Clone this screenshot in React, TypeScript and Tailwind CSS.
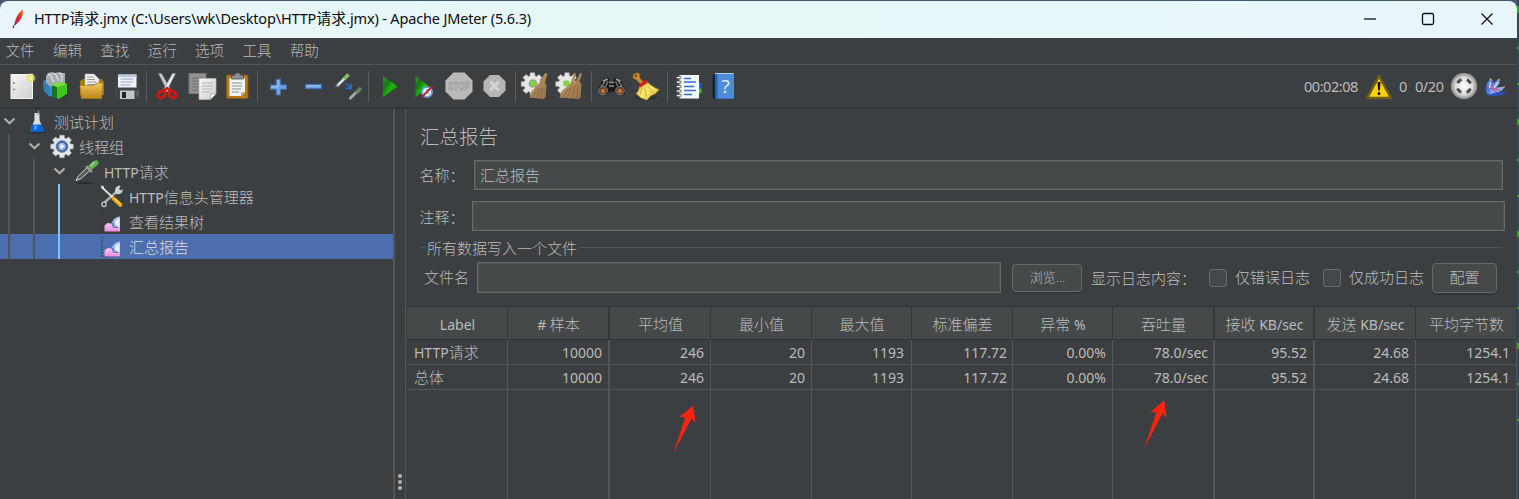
import React from "react";

const cjk = /([\u3000-\u9fff\uff00-\uffef]+)/;

/** Mixed Chinese / Latin label: Latin runs use a slightly smaller face. */
function T({ children, latin = "text-[14px]" }: { children: string; latin?: string }) {
  return (
    <span className="whitespace-pre">
      {children.split(cjk).map((part, i) =>
        cjk.test(part) ? (
          <span key={i}>{part}</span>
        ) : (
          <span key={i} className={`font-normal ${latin}`}>
            {part}
          </span>
        ),
      )}
    </span>
  );
}

function Tool({ children }: { children: React.ReactNode }) {
  return (
    <svg width="35" height="30" viewBox="0 0 35 30" className="h-[30px] w-[35px] shrink-0">
      {children}
    </svg>
  );
}

function Sep() {
  return (
    <div className="flex h-[31px] w-[6.2px] shrink-0 justify-center">
      <div className="w-px bg-[#5a5c5e]" />
    </div>
  );
}

function gearPath(cx: number, cy: number, outer: number, inner: number, teeth: number) {
  const pts: string[] = [];
  for (let i = 0; i < teeth; i++) {
    const a = (i / teeth) * Math.PI * 2 - Math.PI / 2;
    const s = Math.PI / teeth;
    [
      [a - s * 0.75, inner],
      [a - s * 0.5, outer],
      [a + s * 0.5, outer],
      [a + s * 0.75, inner],
    ].forEach(([t, r]) => pts.push(`${(cx + Math.cos(t) * r).toFixed(2)},${(cy + Math.sin(t) * r).toFixed(2)}`));
  }
  return pts.join(" ");
}

function Defs() {
  return (
    <svg width="0" height="0" className="absolute">
      <defs>
        <linearGradient id="paper" x1="0" y1="0" x2="1" y2="1">
          <stop offset="0" stopColor="#f6f6f6" />
          <stop offset="1" stopColor="#cfcfcf" />
        </linearGradient>
        <linearGradient id="folder" x1="0" y1="0" x2="0" y2="1">
          <stop offset="0" stopColor="#f0c860" />
          <stop offset="1" stopColor="#bd8414" />
        </linearGradient>
        <linearGradient id="green" x1="0" y1="0" x2="1" y2="1">
          <stop offset="0" stopColor="#3f8f3a" />
          <stop offset=".3" stopColor="#12750f" />
          <stop offset=".55" stopColor="#1db80e" />
          <stop offset="1" stopColor="#065a05" />
        </linearGradient>
        <linearGradient id="broom" x1="0" y1="0" x2="1" y2="1">
          <stop offset="0" stopColor="#c49c6a" />
          <stop offset="1" stopColor="#957048" />
        </linearGradient>
        <linearGradient id="gold" x1="0" y1="0" x2="1" y2="1">
          <stop offset="0" stopColor="#e2bd2c" />
          <stop offset=".5" stopColor="#fae673" />
          <stop offset="1" stopColor="#d3ab1c" />
        </linearGradient>
        <radialGradient id="glow">
          <stop offset="0" stopColor="#fffbd0" />
          <stop offset=".45" stopColor="#efe06a" />
          <stop offset="1" stopColor="#efe06a" stopOpacity="0" />
        </radialGradient>
        <radialGradient id="ball">
          <stop offset="0" stopColor="#ffffff" />
          <stop offset=".65" stopColor="#dcdcdc" />
          <stop offset="1" stopColor="#868686" />
        </radialGradient>
        <linearGradient id="violet" x1="0" y1="0" x2="0" y2="1">
          <stop offset="0" stopColor="#f3c6ee" />
          <stop offset="1" stopColor="#f08fdc" />
        </linearGradient>
        <linearGradient id="quill" x1="1" y1="0" x2="0" y2="1">
          <stop offset="0" stopColor="#f08b1c" />
          <stop offset=".4" stopColor="#e0301e" />
          <stop offset=".75" stopColor="#c01f4b" />
          <stop offset="1" stopColor="#5b2a86" />
        </linearGradient>
      </defs>
    </svg>
  );
}

function Toolbar() {
  return (
    <div className="flex items-center pl-[3.5px] pt-px">
      <Tool>
        <rect x="7" y="2.500" width="21.500" height="24" fill="url(#paper)" stroke="#f4f4f0" />
        <path d="M9 11h2M9 17.500h2" stroke="#8a8a8a" strokeWidth="1.500" />
        <path d="M8.500 5v19" stroke="#dcdcdc" />
        <circle cx="26.800" cy="6" r="5.400" fill="url(#glow)" />
      </Tool>
      <Tool>
        <path d="M4 9l5-2 7 1v17l-6-1-5-5z" fill="#1f95d3" />
        <path d="M4 9l6 2v13l-5-5z" fill="#2f7fb4" />
        <path d="M7 4l2-3 4-1 3 1 4-1 3 1 3 0v12l-5 2H12l-5-4z" fill="#a3abaf" />
        <path d="M9 4q2-4 3 0t3 6M14 3q2-3 3 0t3 6M20 2q3-2 3 2v6" stroke="#dde3e6" strokeWidth="1.200" fill="none" />
        <path d="M13 13l7-3 8 2v10l-8 5-7-3z" fill="#3fc51c" />
        <path d="M13 13l5 2v11l-5-2z" fill="#17741a" />
        <path d="M13 13l7-3 8 2-10 3z" fill="#7fdc4d" />
        <path d="M27 22l4 1-9 4z" fill="#2a2c2e" opacity=".5" />
      </Tool>
      <Tool>
        <path d="M6 9l3-2h19l2 3v13H6z" fill="#a8750e" />
        <path d="M11 2l9 0 5 5v10H11z" fill="#f1f1f1" stroke="#b5b5b5" strokeWidth=".6" />
        <path d="M13 5h7M13 7.500h8M13 10h9M13 12.500h9" stroke="#9a9a9a" />
        <path d="M6 13.500h14l2-2.500h7l-1.500 15.500H7.500z" fill="url(#folder)" stroke="#b07f17" strokeWidth=".7" />
      </Tool>
      <Tool>
        <path d="M7 2h22.500l1.500 25H5.500z" fill="#42444c" />
        <path d="M9 2.500h18.500v13H9z" fill="#eef3f8" />
        <path d="M9 2.500h18.500v2.500H9z" fill="#b9c8d8" />
        <path d="M11.500 7h13M11.500 10h13M11.500 13h10" stroke="#92a8c6" strokeWidth="1.200" />
        <path d="M11 18.500h14.500v8.500H11z" fill="#c2c5ca" />
        <path d="M13 20h4v6h-4z" fill="#222429" />
        <path d="M27.500 19h2v6h-2z" fill="#62656e" />
      </Tool>
      <Sep />
      <Tool>
        <path d="M8.500 1.500l3 0 9 16-3 2z" fill="#c6c8ca" stroke="#8b8e90" strokeWidth=".5" />
        <path d="M25.500 1.500l-3 0-9 16 3 2z" fill="#e6e7e8" stroke="#8b8e90" strokeWidth=".5" />
        <ellipse cx="11.500" cy="22.500" rx="4" ry="3.100" fill="none" stroke="#d81414" strokeWidth="2.900" transform="rotate(-40 11.500 22.500)" />
        <ellipse cx="22.500" cy="22.500" rx="4" ry="3.100" fill="none" stroke="#d81414" strokeWidth="2.900" transform="rotate(40 22.500 22.500)" />
        <path d="M13.500 19l3.500-3 4 3" stroke="#d81414" strokeWidth="2.500" fill="none" />
      </Tool>
      <Tool>
        <rect x="4" y="1.500" width="17" height="20" fill="#8f9192" stroke="#767879" />
        <path d="M7 6h11M7 9h11M7 12h8M7 15h8M7 18h6" stroke="#6f7172" />
        <path d="M14 6.500h17v15l-5.500 6H14z" fill="url(#paper)" stroke="#b8b8a8" strokeWidth=".7" />
        <path d="M17 11h11M17 14h11M17 17h11M17 20h8" stroke="#b4b4b0" />
        <path d="M25.500 27.500v-5.500h5.500z" fill="#fff" stroke="#97978d" strokeWidth=".7" />
      </Tool>
      <Tool>
        <rect x="6.500" y="3" width="21.500" height="23.500" rx="1" fill="#b77a1e" stroke="#82540f" />
        <path d="M9.500 6h15.500v14l-4 4H9.500z" fill="#f2f2f0" />
        <path d="M12 11h10M12 14h10M12 17h9M12 20h7" stroke="#8e8e8e" strokeWidth="1.200" />
        <path d="M21 24v-4h4z" fill="#b9b9b2" />
        <path d="M11.500 7V3.500h3l1-2.500h4l1 2.500h3V7z" fill="#8c9093" stroke="#4e5356" strokeWidth=".8" />
      </Tool>
      <Sep />
      <Tool>
        <path d="M15.200 7.200h4.300v5.700h6v4.400h-6v5.700h-4.300v-5.700h-5.900v-4.400h5.900z" fill="#6fa2e0" stroke="#3d6fb4" />
        <path d="M17 8v7h-7" stroke="#a7cbf3" fill="none" />
      </Tool>
      <Tool>
        <rect x="9.500" y="12.300" width="16" height="4.400" fill="#6fa2e0" stroke="#3d6fb4" />
        <path d="M10.500 13.800h14" stroke="#a7cbf3" />
      </Tool>
      <Tool>
        <path d="M6 14L14 6" stroke="#d9dcdc" strokeWidth="2.700" />
        <path d="M4.500 14.500l2.500-2" stroke="#8b8f8f" strokeWidth="1.500" />
        <path d="M13 7l4.500-4.500" stroke="#7fbf6c" strokeWidth="3.700" />
        <path d="M14.500 11.500l5 4M20 11.500v5h-5.500" stroke="#1f6fe0" strokeWidth="1.500" fill="none" />
        <path d="M18.500 27l7-7" stroke="#a9adab" strokeWidth="2.700" />
        <path d="M25 21l5-5" stroke="#67855e" strokeWidth="3.300" />
      </Tool>
      <Sep />
      <Tool>
        <path d="M11 4L26 14.500 11 25z" fill="url(#green)" />
      </Tool>
      <Tool>
        <path d="M8.500 4L22.500 14.500 8.500 25z" fill="url(#green)" />
        <circle cx="20" cy="20" r="5" fill="#e8f1fb" stroke="#6fa0d8" strokeWidth="2" />
        <path d="M15 25l10.500-11" stroke="#cc2222" strokeWidth="1.900" />
        <path d="M20 17.500v2.500l2 1.500" stroke="#345f9c" fill="none" />
      </Tool>
      <Tool>
        <path d="M11.500 .500h11l8 8v11l-8 8h-11l-8-8v-11z" fill="#b9bab9" />
        <text x="17" y="18.300" textAnchor="middle" fontSize="10.500" fontWeight="700" textLength="22" lengthAdjust="spacingAndGlyphs" fontFamily="Liberation Sans, sans-serif" fill="#b9bab9" stroke="#a0a1a0" strokeWidth=".8">
          STOP
        </text>
      </Tool>
      <Tool>
        <path d="M13 3h9l6.500 6.500v9l-6.500 6.500h-9l-6.500-6.500v-9z" fill="#b5b6b5" />
        <path d="M13.200 9.700l8.600 8.600M21.800 9.700l-8.600 8.600" stroke="#d4d4d4" strokeWidth="3.200" />
      </Tool>
      <Sep />
      <Tool>
        <polygon points={gearPath(14.5, 12, 11.5, 8.5, 8)} fill="#e6e6e4" stroke="#a4a4a2" strokeWidth=".6" />
        <circle cx="15" cy="11.500" r="4.300" fill="#9aa191" />
        <circle cx="15" cy="11.500" r="2.900" fill="#7ed33f" />
        <path d="M27 1l2.500 .5-2.500 9 1.500 3-1 12-2 1.500-14-1.500 2-6 8-9z" fill="url(#broom)" />
        <path d="M14 25l7-9M18 26l5-10M22 26l3-10" stroke="#7b5c36" strokeWidth=".7" />
      </Tool>
      <Tool>
        <polygon points={gearPath(14, 12, 11.5, 8.5, 8)} fill="#e6e6e4" stroke="#a4a4a2" strokeWidth=".6" />
        <circle cx="13.500" cy="11.500" r="3.300" fill="#7ed33f" />
        <path d="M21 1l2 .5-2 8 1.500 1 4.500-9.500 2 .5-2.500 8 2 3-1 13-2 1.500-19-1.500 2-6 9-8z" fill="url(#broom)" />
        <path d="M10 25l6-9M14 26l5-12M19 26l3-12M24 26l1-12" stroke="#7b5c36" strokeWidth=".7" />
      </Tool>
      <Sep />
      <Tool>
        <path d="M3.500 17l5-8.500 4-3 3 1v3.500h4V6.500l3-1 4 3 5 8.500-1 5.500-6 1-4-4h-5l-4 4-6-1z" fill="#17191a" />
        <path d="M9 9.500l4.500-2.500M22 7l4.500 2.500" stroke="#a2a5a6" strokeWidth="2" />
        <path d="M7 14.500l4-4.500M24.500 10l4 4.500M12 14l2-5M23.500 14l-2-5" stroke="#737778" strokeWidth="1.400" />
        <path d="M15 10.500h5M15 14h5" stroke="#8c9091" strokeWidth="1.300" />
        <circle cx="9" cy="18.500" r="4.300" fill="#70401f" stroke="#8a8d8e" strokeWidth=".9" />
        <circle cx="26" cy="18.500" r="4.300" fill="#70401f" stroke="#8a8d8e" strokeWidth=".9" />
        <circle cx="9" cy="19" r="1.900" fill="#c67f49" />
        <circle cx="26" cy="19" r="1.900" fill="#c67f49" />
      </Tool>
      <Tool>
        <ellipse cx="17" cy="25.500" rx="12" ry="2.500" fill="#2c2e30" opacity=".6" />
        <path d="M4 2.500l4-2 3 1.500v4l4 4.500-3 2.500-4.500-5-3.500-1.500z" fill="#c58a38" stroke="#7c4a12" strokeWidth=".7" />
        <circle cx="7" cy="3.800" r="1.100" fill="#5e3609" />
        <path d="M10.500 14.500l7.500-5q4 5 12 8l-3.500 4-5 2.500-3.500 4-6-2-5-4.500q3-2 3.500-7z" fill="url(#gold)" stroke="#b08c14" strokeWidth=".6" />
        <path d="M13 16l-2 7M16 15.500l1 9M19 14.500l5 6.500" stroke="#caa420" strokeWidth=".8" />
        <path d="M9.500 13.200l7.200-5.700 2.300 3-7.500 5q-2 0-2-2.300z" fill="#d22020" />
      </Tool>
      <Sep />
      <Tool>
        <path d="M28 10.500h2.500v6H28z" fill="#1b5fd0" />
        <path d="M28 16.500h2.500v5H28z" fill="#37b83c" />
        <path d="M28 21.500h2.500v4H28z" fill="#176028" />
        <rect x="8.500" y="3" width="19.500" height="23.500" fill="#f8f8f8" />
        <path d="M13 6.500h7M13 10h12M13 14.500h10M13 18.500h12M13 22.500h8" stroke="#2a6fdc" strokeWidth="1.300" />
        {[4.5, 9, 13.5, 18, 22.5].map((y) => (
          <path key={y} d={`M5.500 ${y}h4.500v2.200h-4.500z`} fill="#f0f0f0" stroke="#4e4e4e" strokeWidth=".7" />
        ))}
      </Tool>
      <Tool>
        <path d="M6.500 3l3-1.500V27.500l-3-1.500z" fill="#17233a" />
        <rect x="9" y="1" width="19" height="26" rx="1" fill="#2b5fae" />
        <rect x="11.500" y="2" width="16.500" height="24.500" fill="#4e8cda" />
        <path d="M9 1.500h18.500" stroke="#b5cdea" />
        <text x="19.500" y="21" textAnchor="middle" fontSize="19" fontFamily="Open Sans, sans-serif" fill="#e7f1fd">
          ?
        </text>
      </Tool>
    </div>
  );
}

const Flask = () => (
  <svg width="25" height="25" viewBox="0 0 25 25">
    <ellipse cx="12" cy="22.500" rx="8.500" ry="1.800" fill="#2a2d2f" />
    <path d="M9.500 4h5v7l4 10.500q0 1.500-2 1.500h-9q-2 0-2-1.500L9.500 11z" fill="#d9dfe4" />
    <path d="M7.500 15.500h9l2.500 6q0 1.500-2 1.500H7.500q-2.500 0-2-1.500z" fill="#0a63cf" />
    <path d="M9.500 16.500h3l-1 4h-3z" fill="#4aa0f2" />
    <path d="M13.500 1.500l-.5 4" stroke="#7e8488" strokeWidth="1.500" />
  </svg>
);

const Gear = () => (
  <svg width="25" height="25" viewBox="0 0 25 25">
    <polygon points={gearPath(12, 12.5, 11.5, 8.8, 8)} fill="#e3e5e8" stroke="#a9adb3" strokeWidth=".6" />
    <circle cx="12" cy="12.500" r="5.800" fill="#3b5f9f" stroke="#6f7f9d" />
    <circle cx="12" cy="12.500" r="3.800" fill="#8fb4e8" />
    <path d="M10.500 9.800l4 2.700-4 2.700z" fill="#fff" />
  </svg>
);

const Dropper = () => (
  <svg width="25" height="25" viewBox="0 0 25 25">
    <ellipse cx="10" cy="24" rx="9" ry="1" fill="#2a2d2f" />
    <path d="M1 21.500l2-4L12 8.500l3 3-9 8z" fill="#555a5b" stroke="#d5d9d9" />
    <path d="M11 7l6 6" stroke="#98a19a" strokeWidth="2" />
    <path d="M13 7l5.500-5q3-1.500 4.500 0t-.5 4l-6 5z" fill="#62b04b" />
    <path d="M15.500 7l4-4" stroke="#a9dc93" strokeWidth="1.300" />
  </svg>
);

const Tools = () => (
  <svg width="25" height="25" viewBox="0 0 25 25">
    <path d="M3 22l2-4L17 7.500" stroke="#a9adae" strokeWidth="2.400" fill="none" />
    <circle cx="4" cy="20.300" r="2.200" fill="#3b3e40" stroke="#c4c7c8" strokeWidth="1.300" />
    <path d="M15.500 9q-1.500-4 1.500-6.500 2-1.500 3.500-.5l-1.500 3 1.500 1.500 2-1.500q.5 3.500-2 4.500t-4 .5z" fill="#cfd2d3" />
    <path d="M1.500 3l11.500 10.500" stroke="#e1e3e3" strokeWidth="1.700" />
    <path d="M.500 1.500l3 .5.5 3z" fill="#f0f0f0" />
    <path d="M13.500 14.500l7 6.500" stroke="#e9a712" strokeWidth="3.800" strokeLinecap="round" />
    <path d="M14.500 14.500l6 5.500" stroke="#ffd84c" strokeWidth="1.200" />
  </svg>
);

const Report = () => (
  <svg width="25" height="25" viewBox="0 0 25 25">
    <path d="M2 3v19.500H21" stroke="#2b2e36" fill="none" strokeDasharray="1.500 1.500" />
    <path d="M11.500 22v-8l2.500-4 3-2 3-.5V22z" fill="#9dbde8" />
    <path d="M15 15v-3l4.500-3.500V20z" fill="#e4eefb" />
    <path d="M4.500 22.500v-6l3-2.500 3.500 .5 3 3.500 5.500 .5 .5 4z" fill="url(#violet)" />
    <path d="M12.500 14l1 4 5 .5" stroke="#4f62ad" fill="none" strokeWidth="1.200" />
  </svg>
);

const tree = [
  { depth: 0, open: true, icon: <Flask />, label: "测试计划" },
  { depth: 1, open: true, icon: <Gear />, label: "线程组" },
  { depth: 2, open: true, icon: <Dropper />, label: "HTTP请求" },
  { depth: 3, open: false, icon: <Tools />, label: "HTTP信息头管理器" },
  { depth: 3, open: false, icon: <Report />, label: "查看结果树" },
  { depth: 3, open: false, icon: <Report />, label: "汇总报告", selected: true },
];

const guideColors = ["bg-[#555555]", "bg-[#555555]", "bg-[#7cc4ff]"];

function Tree() {
  return (
    <div className="w-[393px] shrink-0">
      {tree.map((n, i) => (
        <div key={i} className={`flex h-[25px] items-stretch ${n.selected ? "bg-[#4b6eaf]" : ""}`}>
          {guideColors.slice(0, n.depth).map((c, k) => (
            <div key={k} className="w-[25px] pl-2">
              <div className={`h-full w-0.5 ${c}`} />
            </div>
          ))}
          <div className="flex w-[25px] items-center pl-[3px]">
            {n.open && (
              <svg width="13" height="9" viewBox="0 0 13 9" className="mb-px">
                <path d="M1.500 1.500l5 4.800 5-4.800" fill="none" stroke="#adadad" strokeWidth="2.200" />
              </svg>
            )}
          </div>
          <div className="w-[29px]">{n.icon}</div>
          <div className={`flex items-center pt-px ${n.selected ? "text-[#dddddd]" : "text-[#bbbbbb]"}`}>
            <T>{n.label}</T>
          </div>
        </div>
      ))}
    </div>
  );
}

const columns = ["Label", "# 样本", "平均值", "最小值", "最大值", "标准偏差", "异常 %", "吞吐量", "接收 KB/sec", "发送 KB/sec", "平均字节数"];
const rows = [
  ["HTTP请求", "10000", "246", "20", "1193", "117.72", "0.00%", "78.0/sec", "95.52", "24.68", "1254.1"],
  ["总体", "10000", "246", "20", "1193", "117.72", "0.00%", "78.0/sec", "95.52", "24.68", "1254.1"],
];
const wide = [1, 7, 8];
const gridCols = "grid grid-cols-[101px_102px_101px_101px_100px_101px_100px_102px_100px_101px_101px]";
const edge = (i: number) => (wide.includes(i) ? "border-r-2" : "border-r");

function cellPad(i: number) {
  if (i === 0) return "pl-[7px]";
  if (i === 4) return "justify-end pr-[7px]";
  if (i === 5 || i === 7) return "justify-end pr-[5px]";
  return "justify-end pr-[6px]";
}

function Table() {
  return (
    <div className="flex flex-1 flex-col pl-px">
      <div className={`${gridCols} h-[34px] border-y border-[#323537] bg-[#45494a]`}>
        {columns.map((c, i) => (
          <div key={c} className={`flex items-center justify-center pl-px pt-[3px] ${edge(i)} border-[#34373a]`}>
            <T>{c}</T>
          </div>
        ))}
      </div>
      {rows.map((r) => (
        <div key={r[0]} className={`${gridCols} h-[25px]`}>
          {r.map((v, i) => (
            <div key={i} className={`flex items-center border-b border-[#555555] ${edge(i)} ${cellPad(i)}`}>
              <T>{v}</T>
            </div>
          ))}
        </div>
      ))}
      <div className={`${gridCols} flex-1`}>
        {columns.map((c, i) => (
          <div key={c} className={`${edge(i)} border-[#555555]`} />
        ))}
      </div>
    </div>
  );
}

const field = "border border-[#686a6a] bg-[#45494a] shadow-[inset_0_0_0_1px_#505454] flex items-center";

function Arrow({ className }: { className: string }) {
  return (
    <svg width="24" height="50" viewBox="0 0 24 50" className={`absolute ${className}`}>
      <path d="M.500 48L12.200 12.500 6.500 11.700 20.200 .500 22.600 17.800 18.500 13.200z" fill="#fc2310" />
    </svg>
  );
}

export default function App() {
  return (
    <div
      lang="zh-CN"
      className="relative flex h-[499px] w-[1519px] overflow-hidden bg-[#33465a] font-['Noto_Sans','Noto_Sans_CJK_SC',sans-serif] text-[15px] leading-none text-[#bbbbbb]"
    >
      <Defs />
      <div className="flex w-[1517px] flex-col bg-[#44596b]">
        <div className="mt-px flex h-[37px] shrink-0 items-center rounded-t-lg bg-linear-to-r from-[#e9f5fb] via-[#e5f8f7] to-[#e8f6fc] text-[#0c0c0c]">
          <svg width="14" height="20" viewBox="0 0 14 20" className="mb-[2px] ml-[12px]">
            <path d="M2 16.500L3.500 11Q6 4 10.500 .500 12 4 9 9.500 6.500 14 3.500 16z" fill="url(#quill)" />
            <path d="M1 19l1-2.500" stroke="#4b2a70" strokeWidth="1.200" />
          </svg>
          <div className="mb-[2px] ml-[8px] text-[15px]">
            <T latin="text-[14.5px] tracking-[-0.16px]">{"HTTP请求.jmx (C:\\Users\\wk\\Desktop\\HTTP请求.jmx) - Apache JMeter (5.6.3)"}</T>
          </div>
          <div className="mb-px ml-auto flex items-center pr-[24px]">
            <svg width="130" height="14" viewBox="0 0 130 14" fill="none" stroke="#111" strokeWidth="1.300">
              <path d="M1 7h12" />
              <rect x="59.500" y="1.500" width="11" height="11" rx="1.500" />
              <path d="M118.500 1.500l11 11M129.500 1.500l-11 11" />
            </svg>
          </div>
        </div>

        <div className="flex min-h-0 flex-1 flex-col bg-[#3c3f41]">
          <div className="flex h-[27px] shrink-0 items-center gap-[18.400px] border-b border-[#555555] pb-px pl-[5.500px] text-[14.500px] font-light">
            {["文件", "编辑", "查找", "运行", "选项", "工具", "帮助"].map((m) => (
              <span key={m} className="w-[29px]">
                {m}
              </span>
            ))}
          </div>

          <div className="flex h-[44px] shrink-0 items-center justify-between border-b-2 border-[#323537]">
            <Toolbar />
            <div className="flex items-center pr-[9px] pt-px text-[14.500px] tracking-[-0.450px]">
              <span className="w-[61px]">00:02:08</span>
              <svg width="28" height="26" viewBox="0 0 28 26" className="mr-[6px]">
                <path d="M14 2L26 24H2z" fill="#f7cf0b" stroke="#6f5c10" strokeWidth="2.600" strokeLinejoin="round" />
                <path d="M12.500 8h3l-.7 8.500h-1.600zM12.700 18.200h2.600v2.800h-2.600z" fill="#161616" />
              </svg>
              <span className="w-[16px]">0</span>
              <span className="w-[35px]">0/20</span>
              <svg width="28" height="28" viewBox="0 0 28 28">
                <circle cx="14" cy="13" r="13.200" fill="url(#ball)" />
                <circle cx="14" cy="13" r="7" fill="none" stroke="#4c5052" strokeWidth="3" strokeDasharray="5.500 5.496" strokeDashoffset="-2.750" />
              </svg>
              <svg width="24" height="24" viewBox="0 0 24 24" className="ml-[6px]">
                <path d="M3 20L1 14.500 2.500 10 6 13z" fill="#2f58c4" />
                <path d="M3 20L2.500 9 6.500 3 9 6 8 14z" fill="#4f7ee0" />
                <path d="M4 20L8.500 9l6.500-5 .8 4-5.800 8z" fill="#6f98ea" />
                <path d="M4 20l9-7.500 8-1-3 4-9 4z" fill="#8dabee" />
                <path d="M3 20l11-3 9 .5-5 2.500-9 1z" fill="#2d50c8" />
                <path d="M3.500 12l5 1.500 4 4M7 9l4 4.500 5 2" stroke="#d8486a" fill="none" strokeWidth="1.100" />
                <path d="M13.500 5l2-1.700.3 2.700zM5.500 5l1.500-2 .8 2.500zM18.500 12.500l3-1.200-1.800 2z" fill="#f0b040" />
                <path d="M5.500 13l1-6M10 13l4-6" stroke="#dfe9ff" strokeWidth="1.300" />
              </svg>
            </div>
          </div>

          <div className="flex min-h-0 flex-1 font-light">
            <Tree />
            <div className="flex w-[13px] shrink-0 flex-col items-start justify-end border-l-2 border-r border-l-[#555555] border-r-[#555555] pb-[9px] pl-[2.500px]">
              <div className="flex flex-col gap-[2px]">
                {[0, 1, 2].map((k) => (
                  <div key={k} className="size-[4px] rounded-full bg-[#b4b4b4]" />
                ))}
              </div>
            </div>

            <div className="flex min-w-0 flex-1 flex-col">
              <div className="flex h-[51px] shrink-0 items-center pl-[14px] pt-[5px] text-[19.500px]">汇总报告</div>
              <div className="flex h-[30px] shrink-0 items-center pl-[13.500px]">
                <span className="w-[54.500px] whitespace-nowrap">名称：</span>
                <div className={`${field} h-[30px] w-[1029px] pl-[5px]`}>汇总报告</div>
              </div>
              <div className="mt-[11px] flex h-[30px] shrink-0 items-center pl-[13.500px]">
                <span className="w-[52.500px] whitespace-nowrap pt-[2px]">注释：</span>
                <div className={`${field} h-[30px] w-[1033px]`} />
              </div>
              <div className="mt-[8px] flex h-[17px] shrink-0 items-center pl-[15px] pr-[15px]">
                <div className="h-px w-1 bg-[#555555]" />
                <span className="px-[2px] pt-px">所有数据写入一个文件</span>
                <div className="h-px flex-1 bg-[#555555]" />
              </div>
              <div className="mt-[5px] flex h-[33px] shrink-0 items-center pl-[18px]">
                <span className="w-[53px]">文件名</span>
                <div className={`${field} h-[31px] w-[524px]`} />
                <div className="ml-[11px] flex h-[28px] w-[70px] items-center justify-center rounded border border-[#666969] bg-[#45494a] pl-px text-[13px] shadow-[0_2px_0_#35383a]">
                  浏览...
                </div>
                <span className="ml-[9px] w-[118px] whitespace-nowrap pt-px">显示日志内容：</span>
                <div className="size-[18px] rounded-[3px] border border-[#6b6b6b] bg-[#43494a]" />
                <span className="ml-[8px] w-[88px]">仅错误日志</span>
                <div className="size-[18px] rounded-[3px] border border-[#6b6b6b] bg-[#43494a]" />
                <span className="ml-[8px] w-[83px]">仅成功日志</span>
                <div className="flex h-[30px] w-[65px] items-center justify-center rounded border border-[#666969] bg-[#45494a] shadow-[0_2px_0_#35383a]">
                  配置
                </div>
              </div>
              <div className="mt-[12px] flex min-h-0 flex-1">
                <Table />
              </div>
            </div>
          </div>
        </div>
      </div>
      <div className="flex flex-1 flex-col gap-[34px] pt-[6px]">
        {[7, 2, 2, 6, 2, 2, 6, 2, 2, 6, 2, 2].map((h, i) => (
          <div key={i} className="w-full bg-[#38a32c]" style={{ height: h }} />
        ))}
      </div>
      <Arrow className="left-[673px] top-[405px]" />
      <Arrow className="left-[1144px] top-[400px]" />
    </div>
  );
}
